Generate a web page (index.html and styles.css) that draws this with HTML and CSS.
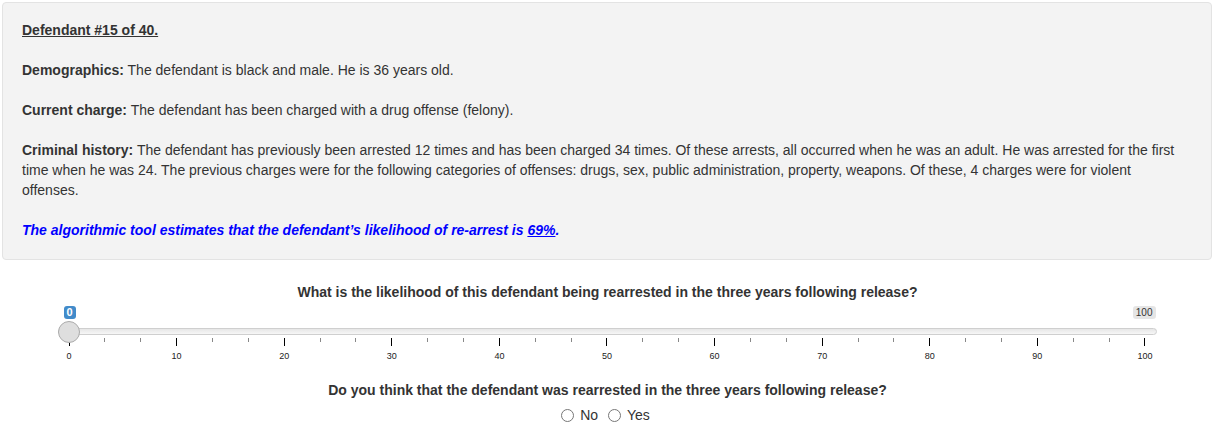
FILE: index.html
```html
<!DOCTYPE html>
<html>
<head>
<meta charset="utf-8">
<link rel="stylesheet" href="styles.css">
</head>
<body>
<div class="well">
  <p class="title"><b>Defendant #15 of 40.</b></p>
  <p><b>Demographics:</b> The defendant is black and male. He is 36 years old.</p>
  <p><b>Current charge:</b> The defendant has been charged with a drug offense (felony).</p>
  <p><b>Criminal history:</b> The defendant has previously been arrested 12 times and has been charged 34 times. Of these arrests, all occurred when he was an adult. He was arrested for the first time when he was 24. The previous charges were for the following categories of offenses: drugs, sex, public administration, property, weapons. Of these, 4 charges were for violent offenses.</p>
  <p class="algo">The algorithmic tool estimates that the defendant’s likelihood of re-arrest is <u>69%</u>.</p>
</div>

<div class="question">
  <label class="q-label">What is the likelihood of this defendant being rearrested in the three years following release?</label>
  <div class="slider">
    <div class="labels">
      <span class="single">0</span>
      <span class="max">100</span>
    </div>
    <div class="track">
      <div class="line"></div>
      <div class="handle"></div>
    </div>
    <div class="grid">
      <div class="seg"><i class="major"></i><i></i><i></i></div>
      <div class="seg"><i class="major"></i><i></i><i></i></div>
      <div class="seg"><i class="major"></i><i></i><i></i></div>
      <div class="seg"><i class="major"></i><i></i><i></i></div>
      <div class="seg"><i class="major"></i><i></i><i></i></div>
      <div class="seg"><i class="major"></i><i></i><i></i></div>
      <div class="seg"><i class="major"></i><i></i><i></i></div>
      <div class="seg"><i class="major"></i><i></i><i></i></div>
      <div class="seg"><i class="major"></i><i></i><i></i></div>
      <div class="seg"><i class="major"></i><i></i><i></i></div>
      <i class="major last"></i>
    </div>
    <div class="grid-text">
      <span>0</span><span>10</span><span>20</span><span>30</span><span>40</span><span>50</span><span>60</span><span>70</span><span>80</span><span>90</span><span>100</span>
    </div>
  </div>
</div>

<div class="question q2">
  <label class="q-label">Do you think that the defendant was rearrested in the three years following release?</label>
  <div class="radios">
    <label class="radio"><span class="circle"></span>No</label>
    <label class="radio"><span class="circle"></span>Yes</label>
  </div>
</div>
</body>
</html>
```

FILE: styles.css
```css
* { box-sizing: border-box; }
body {
  margin: 0;
  font-family: "Liberation Sans", Arial, Helvetica, sans-serif;
  font-size: 14px;
  line-height: 20px;
  color: #333;
  background: #fff;
}
.well {
  margin: 2px 3px 0 2px;
  padding: 17px 30px 19px 19px;
  background: #f3f3f3;
  border: 1px solid #e3e3e3;
  border-radius: 4px;
}
.well p { margin: 0 0 20px 0; }
.well p:last-child { margin-bottom: 0; }
.title b { text-decoration: underline; }
.algo {
  color: #0000ff;
  font-weight: bold;
  font-style: italic;
}
.question {
  display: flex;
  flex-direction: column;
  align-items: center;
  margin-top: 22px;
}
.q-label {
  font-weight: bold;
  display: block;
  line-height: 20px;
}
.slider {
  width: 1100px;
  margin-top: 4px;
  position: relative;
}
.labels {
  display: flex;
  justify-content: space-between;
  align-items: flex-start;
  height: 15px;
}
.single {
  margin-left: 6px;
  background: #428bca;
  color: #fff;
  font-size: 11px;
  line-height: 13px;
  padding: 0 3px;
  border-radius: 3px;
  font-weight: bold;
}
.max {
  margin-right: 2px;
  background: rgba(0,0,0,0.1);
  color: #333;
  font-size: 10px;
  line-height: 13px;
  padding: 0 3px;
  border-radius: 3px;
}
.track {
  position: relative;
  height: 22px;
}
.line {
  position: absolute;
  left: 0;
  right: 1px;
  top: 7px;
  height: 7px;
  border: 1px solid #cfcfcf;
  border-radius: 6px;
  background: linear-gradient(to bottom, #dedede -50%, #fff 150%);
}
.handle {
  position: absolute;
  left: 0;
  top: 0;
  width: 22px;
  height: 22px;
  border-radius: 50%;
  border: 1px solid #ababab;
  background: #dedede;
}
.grid {
  display: flex;
  margin: -5px 12px 0 11px;
  height: 8px;
  align-items: flex-start;
}
.seg {
  flex: 1;
  display: flex;
}
.seg i {
  flex: 1;
  display: block;
  height: 4px;
  border-left: 1px solid #888;
}
.seg i.major, i.major {
  height: 8px;
  border-left: 1px solid #000;
}
i.last { display: block; width: 1px; }
.grid-text {
  display: flex;
  justify-content: space-between;
  margin: 4px 12px 0 11px;
  font-size: 9px;
  line-height: 12px;
  color: #222;
}
.grid-text span {
  width: 1px;
  display: flex;
  justify-content: center;
}
.q2 { margin-top: 18px; }
.radios {
  display: flex;
  gap: 10px;
  margin-top: 5px;
  margin-left: -4px;
}
.radio {
  display: flex;
  align-items: center;
  gap: 6px;
  font-size: 14px;
  line-height: 20px;
}
.circle {
  width: 13px;
  height: 13px;
  border: 1px solid #777;
  border-radius: 50%;
  background: #fff;
}
```
